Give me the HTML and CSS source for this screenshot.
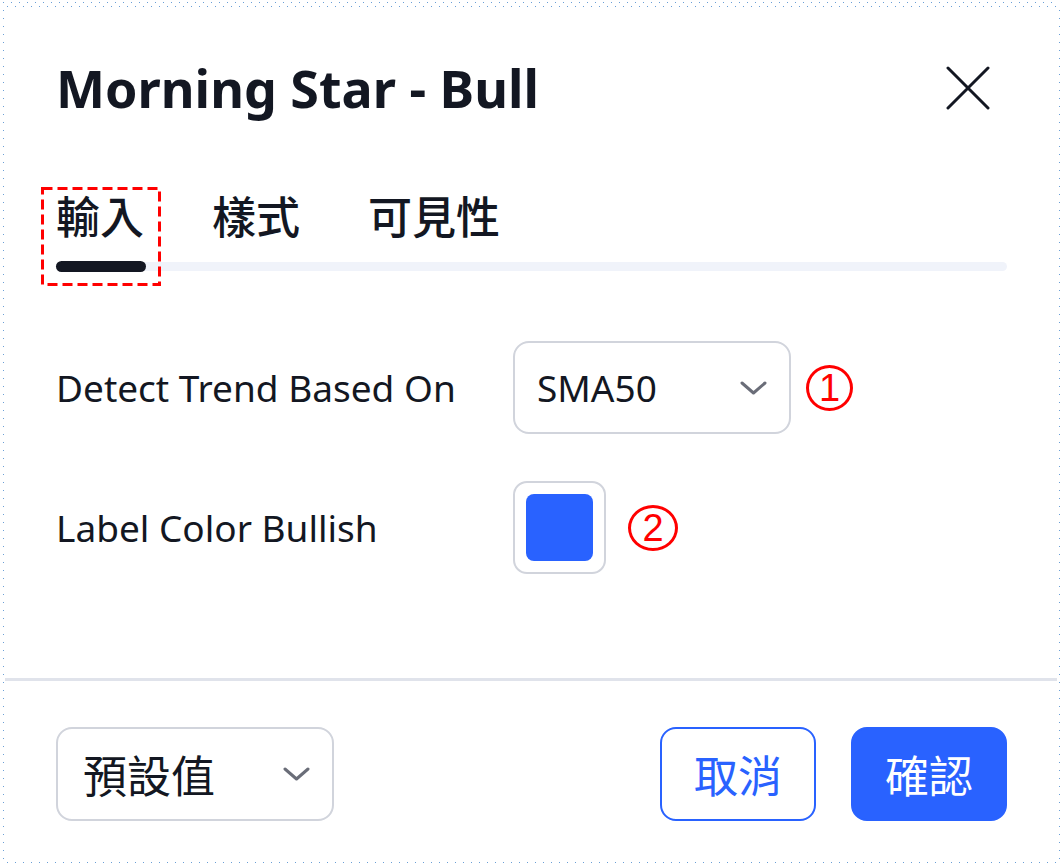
FILE: index.html
```html
<!DOCTYPE html>
<html lang="zh-Hant">
<head>
<meta charset="utf-8">
<title>Morning Star - Bull</title>
<link rel="stylesheet" href="styles.css">
</head>
<body>
<div class="frame">
  <header class="header">
    <h1 class="title">Morning Star - Bull</h1>
    <button class="close" aria-label="close">
      <svg width="44" height="44" viewBox="0 0 44 44"><path d="M2 2 L42 42 M42 2 L2 42" stroke="#131722" stroke-width="3" stroke-linecap="round" fill="none"/></svg>
    </button>
  </header>

  <nav class="tabs">
    <div class="tab-list">
      <span class="tab active">輸入</span>
      <span class="tab">樣式</span>
      <span class="tab">可見性</span>
    </div>
    <div class="track"><div class="indicator"></div></div>
  </nav>

  <svg class="annot-box" width="120" height="99" viewBox="0 0 120 99"><rect x="1.5" y="1.5" width="117" height="96" fill="none" stroke="#ff0000" stroke-width="3" stroke-dasharray="10 5"/></svg>

  <main class="content">
    <div class="row">
      <div class="label">Detect Trend Based On</div>
      <div class="control">
        <div class="select">
          <span>SMA50</span>
          <svg class="chev" width="27" height="14" viewBox="0 0 27 14"><path d="M2 2 L13.5 12 L25 2" stroke="#6a6d78" stroke-width="3" stroke-linecap="round" stroke-linejoin="round" fill="none"/></svg>
        </div>
        <span class="num num-1">1</span>
      </div>
    </div>
    <div class="row">
      <div class="label">Label Color Bullish</div>
      <div class="control">
        <div class="swatch"><div class="swatch-fill"></div></div>
        <span class="num num-2">2</span>
      </div>
    </div>
  </main>

  <div class="divider"></div>

  <footer class="footer">
    <div class="preset">
      <span>預設值</span>
      <svg class="chev" width="27" height="14" viewBox="0 0 27 14"><path d="M2 2 L13.5 12 L25 2" stroke="#6a6d78" stroke-width="3" stroke-linecap="round" stroke-linejoin="round" fill="none"/></svg>
    </div>
    <div class="actions">
      <button class="btn btn-outline">取消</button>
      <button class="btn btn-primary">確認</button>
    </div>
  </footer>
</div>
</body>
</html>
```

FILE: styles.css
```css
html, body {
  margin: 0;
  padding: 0;
  background: #ffffff;
}

.frame {
  position: relative;
  width: 1062px;
  height: 866px;
  box-sizing: border-box;
  display: flex;
  flex-direction: column;
  font-family: "Noto Sans", "Noto Sans CJK TC", sans-serif;
  color: #131722;
  background-color: #ffffff;
  background-image:
    repeating-linear-gradient(90deg, #6a9fd6 0 1px, transparent 1px 8px),
    repeating-linear-gradient(90deg, #6a9fd6 0 1px, transparent 1px 8px),
    repeating-linear-gradient(180deg, #6a9fd6 0 1px, transparent 1px 8px),
    repeating-linear-gradient(180deg, #6a9fd6 0 1px, transparent 1px 8px),
    repeating-linear-gradient(90deg, #6a9fd6 0 1px, transparent 1px 8px);
  background-repeat: no-repeat;
  background-size:
    1056px 1px,
    1050px 1px,
    1px 850px,
    1px 850px,
    1050px 1px;
  background-position:
    3px 2px,
    7px 6px,
    3px 10px,
    1059px 10px,
    7px 862px;
}

.header {
  display: flex;
  align-items: center;
  justify-content: space-between;
  margin-top: 56px;
  height: 64px;
  padding: 0 72px 0 56px;
}

.title {
  margin: 0;
  font-size: 52px;
  line-height: 64px;
  font-weight: 700;
}

.close {
  width: 44px;
  height: 44px;
  padding: 0;
  border: 0;
  background: none;
  display: flex;
}

.tabs {
  margin: 71px 55px 0 56px;
}

.tab-list {
  display: flex;
  gap: 68px;
  height: 48px;
  font-size: 44px;
  line-height: 48px;
  font-weight: 500;
}

.tab {
  font-family: "Noto Sans CJK TC", sans-serif;
}

.track {
  margin-top: 23px;
  height: 9px;
  border-radius: 5px;
  background: #f0f3fa;
}

.indicator {
  width: 90px;
  height: 11px;
  position: relative;
  top: -1px;
  border-radius: 6px;
  background: #131722;
}

.annot-box {
  position: absolute;
  left: 41px;
  top: 187px;
}

.content {
  flex: 1;
  display: flex;
  flex-direction: column;
  gap: 47px;
  margin-top: 70px;
  padding: 0 55px 0 56px;
}

.row {
  display: grid;
  grid-template-columns: 457px auto;
  align-items: center;
}

.label {
  font-size: 37px;
  line-height: 48px;
}

.control {
  display: flex;
  align-items: center;
}

.select {
  box-sizing: border-box;
  width: 278px;
  height: 93px;
  border: 2px solid #d1d4dc;
  border-radius: 16px;
  display: flex;
  align-items: center;
  justify-content: space-between;
  padding: 0 22px 0 22px;
  font-size: 37px;
}

.swatch {
  box-sizing: border-box;
  width: 93px;
  height: 93px;
  border: 2px solid #d1d4dc;
  border-radius: 14px;
  padding: 11px;
}

.swatch-fill {
  width: 67px;
  height: 67px;
  border-radius: 8px;
  background: #2962ff;
}

.num {
  box-sizing: border-box;
  width: 47px;
  height: 46px;
  border: 3px solid #ff0000;
  border-radius: 50%;
  color: #ff0000;
  font-family: "Liberation Sans", sans-serif;
  font-size: 38px;
  line-height: 1;
  display: flex;
  align-items: center;
  justify-content: center;
}

.num-1 {
  margin-left: 15px;
}

.num-2 {
  margin-left: 22px;
  width: 50px;
}

.divider {
  height: 3px;
  margin: 0 5px;
  background: #e0e3eb;
}

.footer {
  display: flex;
  align-items: center;
  height: 94px;
  margin: 46px 0 45px;
  padding: 0 55px 0 56px;
}

.preset {
  box-sizing: border-box;
  width: 278px;
  height: 94px;
  border: 2px solid #d1d4dc;
  border-radius: 16px;
  display: flex;
  align-items: center;
  justify-content: space-between;
  padding: 0 22px 0 25px;
  font-family: "Noto Sans CJK TC", sans-serif;
  font-size: 44px;
}

.actions {
  margin-left: auto;
  display: flex;
  gap: 35px;
}

.btn {
  box-sizing: border-box;
  width: 156px;
  height: 94px;
  border-radius: 16px;
  font-family: "Noto Sans CJK TC", sans-serif;
  font-size: 44px;
  padding: 0;
  cursor: pointer;
}

.btn-outline {
  border: 2px solid #2962ff;
  background: #ffffff;
  color: #2962ff;
}

.btn-primary {
  border: 2px solid #2962ff;
  background: #2962ff;
  color: #ffffff;
}
```
